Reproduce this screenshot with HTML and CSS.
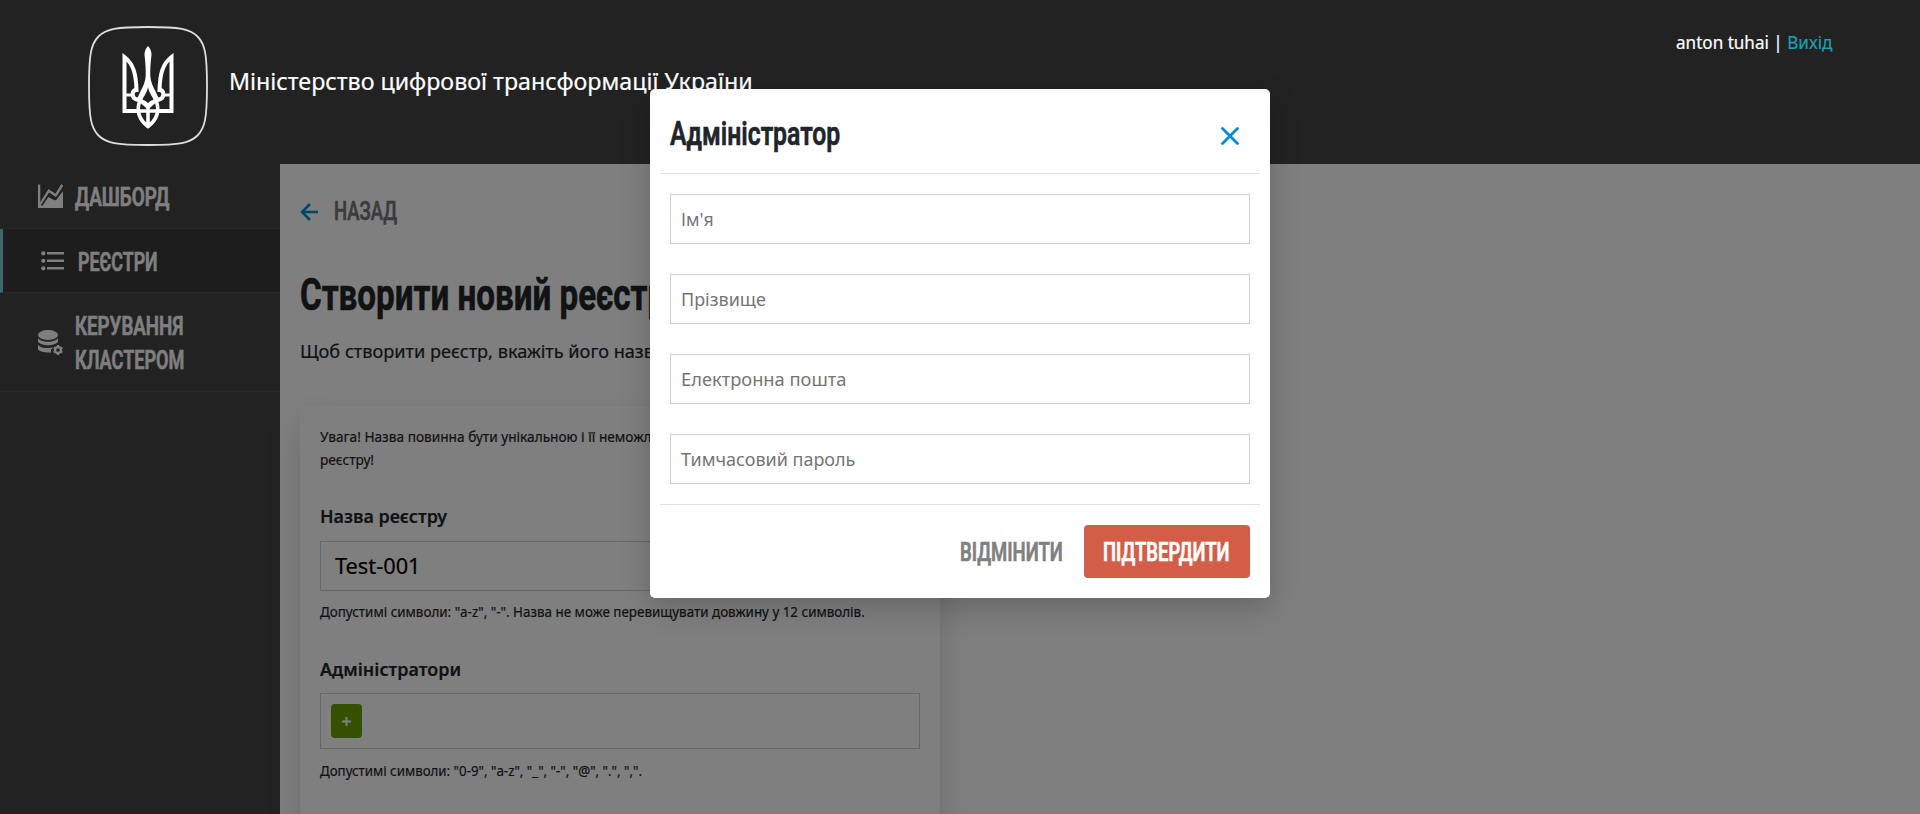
FILE: index.html
```
<!DOCTYPE html>
<html lang="uk">
<head>
<meta charset="utf-8">
<title>Створити новий реєстр</title>
<link rel="stylesheet" href="styles.css">
</head>
<body>
<header class="header">
  <svg class="emblem" viewBox="0 0 120 120" fill="none" stroke="#fff">
    <path d="M60 1C28 1 18 3 10.500 10.500S1 28 1 60s2 42 9.500 49.500S28 119 60 119s42-2 49.500-9.500S119 92 119 60s-2-42-9.500-49.500S92 1 60 1Z" stroke="#ddd" stroke-width="1.800"/>
    <path d="M60 20c-2.500 3-3.500 5-3.500 9 .8 7 1.500 14 1.200 21-.3 6-3 11-5.500 16-1.500 3-3 7-5.500 9 5 0 9.300 3 13.300 7 4-4 8.300-7 13.300-7-2.500-2-4-6-5.500-9-2.500-5-5.200-10-5.500-16-.3-7 .4-14 1.200-21 0-4-1-6-3.500-9Z" fill="#fff" stroke="none"/>
    <path d="M60 61c-1 6-5 10-5.500 13 2 0 4 1.500 5.500 3 1.500-1.500 3.500-3 5.500-3-.5-3-4.500-7-5.500-13Z" fill="#222" stroke="none"/>
    <g stroke-width="4">
      <path d="M52 85H36.500V31c9 7 11.500 17 12 33-5 0-5 7-1 9 6 1 8.500 4 12.500 8M68 85h15.500V31c-9 7-11.500 17-12 33 5 0 5 7 1 9-6 1-8.500 4-12.500 8"/>
      <path d="M37 69h7M83 69h-7" stroke-width="3"/>
      <path d="M52 74c-4 11-.5 20 8 26.500 8.500-6.500 12-15.500 8-26.500M60 80v19M51 85h18" stroke-width="3.600"/>
    </g>
  </svg>
  <div class="ministry"><span class="fit fit-ministry">Міністерство цифрової трансформації України</span></div>
  <div class="user"><span class="fit fit-user">anton tuhai | <a class="logout">Вихід</a></span></div>
</header>

<div class="layout">
  <nav class="sidebar">
    <a class="nav-item">
      <svg class="nav-icon" width="25" height="24" viewBox="0 0 25 24"><path d="M0 .5h2.300v18L10.300 13l6.700 3.500L25 7v17H0Z" fill="#fff"/><path d="m3 19.500 7.800-12.800 7 4.800L24.300.8" fill="none" stroke="#fff" stroke-width="2.500"/><path d="m3.600 21.500 7.400-11 7 4.300 7-9.800" fill="none" stroke="#444" stroke-width="1.700"/></svg>
      <span class="fit fit-dash">ДАШБОРД</span>
    </a>
    <a class="nav-item nav-item-active">
      <svg class="nav-icon" width="24" height="20" viewBox="0 0 24 20" fill="#fff"><circle cx="2.300" cy="2.300" r="2.100"/><circle cx="2.300" cy="9.800" r="2.100"/><circle cx="2.300" cy="17.300" r="2.100"/><path d="M6 1h17v2.500H6zM6 8.500h17V11H6zM6 16h17v2.500H6z"/></svg>
      <span class="fit fit-reg">РЕЄСТРИ</span>
    </a>
    <a class="nav-item nav-item-tall">
      <svg class="nav-icon" width="25" height="25" viewBox="0 0 25 25"><g fill="#fff"><ellipse cx="10" cy="5" rx="10" ry="5"/><path d="M0 8c3 5 17 5 20 0v3.500c-3 5-17 5-20 0ZM0 14.200c3 4.300 9 4.600 15 2.800l-2 3c-5 .5-10-.5-13-3ZM0 16c3 3 8 3.500 13 3v3.400C7 22.800 2 22 0 19.500Z"/></g><path d="M0 13.500c3 4.500 12 4.500 17 2" fill="none" stroke="#444" stroke-width="1.500"/><circle cx="20" cy="20" r="5.500" fill="#444"/><circle cx="20" cy="20" r="3" fill="none" stroke="#fff" stroke-width="2.300"/><path d="M20 15v1.500M20 23.500V25M15.700 17.500l1.300.8M23 21.700l1.300.8M15.700 22.500l1.300-.8M23 18.300l1.300-.8" stroke="#fff" stroke-width="2.200"/></svg>
      <span class="nav-lines"><span class="fit fit-manage">КЕРУВАННЯ</span><span class="fit fit-cluster">КЛАСТЕРОМ</span></span>
    </a>
  </nav>
  <main class="content">
    <a class="back">
      <svg width="18" height="18" viewBox="0 0 18 18" fill="none" stroke="#008dcf" stroke-width="2.500"><path d="M18 9H2M10 1 2 9l8 8"/></svg>
      <span class="fit fit-back">НАЗАД</span>
    </a>
    <h1 class="title"><span class="fit fit-title">Створити новий реєстр</span></h1>
    <p class="lead"><span class="fit fit-lead">Щоб створити реєстр, вкажіть його назву</span></p>
    <section class="card">
      <p class="note"><span class="fit fit-note">Увага! Назва повинна бути унікальною і її неможливо</span><br><span class="fit fit-note">реєстру!</span></p>
      <h2 class="label"><span class="fit fit-label">Назва реєстру</span></h2>
      <div class="name-box"><span class="fit fit-test">Test-001</span></div>
      <p class="note hint"><span class="fit fit-hint">Допустимі символи: "a-z", "-". Назва не може перевищувати довжину у 12 символів.</span></p>
      <h2 class="label label-admins"><span class="fit fit-label">Адміністратори</span></h2>
      <div class="admins-box"><button class="add"><svg width="9" height="9" viewBox="0 0 9 9"><path d="M4.500 0v9M0 4.500h9" stroke="#fff" stroke-width="2"/></svg></button></div>
      <p class="note hint-admins"><span class="fit fit-hint2">Допустимі символи: "0-9", "a-z", "_", "-", "@", ".", ",".</span></p>
    </section>
  </main>
</div>

<div class="backdrop"></div>
<div class="modal">
  <div class="modal-head">
    <h2 class="modal-title"><span class="fit fit-modal">Адміністратор</span></h2>
    <svg class="close" width="18" height="18" viewBox="0 0 18 18" fill="none" stroke="#008dcf" stroke-width="2.800" stroke-linecap="round"><path d="m1.500 1.500 15 15M16.500 1.500l-15 15"/></svg>
  </div>
  <div class="modal-body">
    <div class="field"><span class="fit fit-name">Ім'я</span></div>
    <div class="field"><span class="fit fit-ph">Прізвище</span></div>
    <div class="field"><span class="fit fit-mail">Електронна пошта</span></div>
    <div class="field"><span class="fit fit-ph">Тимчасовий пароль</span></div>
  </div>
  <div class="modal-foot">
    <button class="cancel"><span class="fit fit-cancel">ВІДМІНИТИ</span></button>
    <button class="confirm"><span class="fit fit-confirm">ПІДТВЕРДИТИ</span></button>
  </div>
</div>
</body>
</html>
```
FILE: styles.css
```
* { box-sizing: border-box; }
body { margin: 0; height: 814px; overflow: hidden; background: #fff; color: #212529; font-family: "Noto Sans", sans-serif; }
h1, h2, p { margin: 0; }
button { border: 0; padding: 0; background: none; }

/* Condensed lettering: each label is narrowed from its left edge */
.fit { display: inline-block; white-space: nowrap; transform-origin: 0 50%; -webkit-text-stroke: .2px currentColor; }
.nav-item .fit, .back .fit, .title .fit, .modal-title .fit, .modal-foot .fit { -webkit-text-stroke-width: .6px; }
.fit-ministry { transform: scaleX(.968); }
.fit-user { transform: scaleX(.976); }
.fit-dash { transform: scaleX(.755); }
.fit-reg { transform: scaleX(.713); }
.fit-manage { transform: scaleX(.748); }
.fit-cluster { transform: scaleX(.724); }
.fit-back { transform: scaleX(.74); }
.fit-title { transform: scaleX(.737); }
.fit-lead { transform: scaleX(.98); }
.fit-note { transform: scaleX(.942); }
.fit-label { transform: scaleX(.966); }
.fit-test { transform: scaleX(.99); }
.fit-hint { transform: scaleX(.924); }
.fit-hint2 { transform: scaleX(.917); }
.fit-modal { transform: scaleX(.752); }
.fit-name { transform: scaleX(.95); }
.fit-ph { transform: scaleX(.972); }
.fit-mail { transform: scaleX(.988); }
.fit-cancel { transform: scaleX(.74); }
.fit-confirm { transform: scaleX(.737); }

.header { display: flex; align-items: flex-start; height: 164px; padding: 26px 0 0 88px; background: #222; color: #fff; }
.emblem { width: 120px; height: 120px; flex: none; }
.ministry { margin: 37px 0 0 21px; font-size: 24px; line-height: 36px; }
.user { width: 244px; margin: 2px 0 0 auto; font-size: 17.5px; line-height: 28px; }
.logout { color: #1aa1b5; }

.layout { display: flex; height: 650px; }
.sidebar { width: 280px; flex: none; background: #444; }
.nav-item { display: flex; align-items: center; gap: 12px; height: 65px; padding: 0 0 0 38px; border-bottom: 1px solid #555; color: #fff; font: 600 25px/34px Roboto, sans-serif; }
.nav-item .nav-icon { flex: none; }
.nav-item .fit { padding-top: 2px; margin-bottom: -2px; }
.nav-item-active { height: 64px; gap: 13px; background: #3a3a3a; border-left: 3px solid #76d0da; }
.nav-item-tall { height: 99px; }
.nav-lines { display: flex; flex-direction: column; align-items: flex-start; }

.content { flex: 1; padding: 31px 0 0 20px; }
.back { display: flex; align-items: center; gap: 16px; height: 34px; color: #767676; font: 500 25px/36px Roboto, sans-serif; }
.title { margin-top: 36px; font: 700 45px/60px Roboto, sans-serif; }
.lead { margin-top: 11px; font-size: 18.5px; line-height: 30px; }
.card { width: 640px; height: 440px; margin-top: 40px; padding: 19px 20px; background: #fff; box-shadow: 0 16px 32px rgba(0, 0, 0, .16); }
.note { font-size: 14.5px; line-height: 23px; }
.label { margin-top: 30px; font-size: 18.5px; font-weight: 600; line-height: 30px; }
.name-box { height: 50px; margin-top: 10px; padding: 1px 14px; border: 1px solid #cccedb; color: #000; font-size: 22px; line-height: 44px; }
.hint { margin-top: 9px; }
.label-admins { margin-top: 31px; }
.admins-box { height: 56px; margin-top: 9px; padding: 10px; border: 1px solid #cccedb; }
.add { display: flex; align-items: center; justify-content: center; width: 31px; height: 34px; border-radius: 4px; background: #6ba300; }
.hint-admins { margin-top: 10px; }

.backdrop { position: absolute; inset: 164px 0 0 0; background: rgba(0, 0, 0, .5); }
.modal { position: absolute; left: 650px; top: 89px; width: 620px; height: 509px; padding: 0 10px; border-radius: 5px; background: #fff; box-shadow: 0 10px 30px rgba(0, 0, 0, .2); }
.modal-head { display: flex; justify-content: space-between; align-items: flex-start; height: 85px; padding: 22px 21px 0 10px; border-bottom: 1px solid #dee2e6; }
.modal-title { font: 600 33px/45px Roboto, sans-serif; }
.close { margin-top: 16px; }
.modal-body { display: flex; flex-direction: column; gap: 30px; height: 331px; padding: 20px 10px 0; border-bottom: 1px solid #e0e0ec; }
.field { height: 50px; padding: 0 10px; border: 1px solid #cccedb; color: #757575; font-size: 18.5px; line-height: 48px; }
.field .fit { -webkit-text-stroke-width: 0; }
.modal-foot { display: flex; justify-content: flex-end; padding: 20px 10px 0; }
.cancel { width: 124px; height: 53px; color: #808080; font: 600 25px/56px Roboto, sans-serif; text-align: left; }
.confirm { width: 166px; height: 53px; padding-left: 19px; border-radius: 4px; background: #d45d48; color: #fff; font: 600 25px/56px Roboto, sans-serif; text-align: left; }
```
